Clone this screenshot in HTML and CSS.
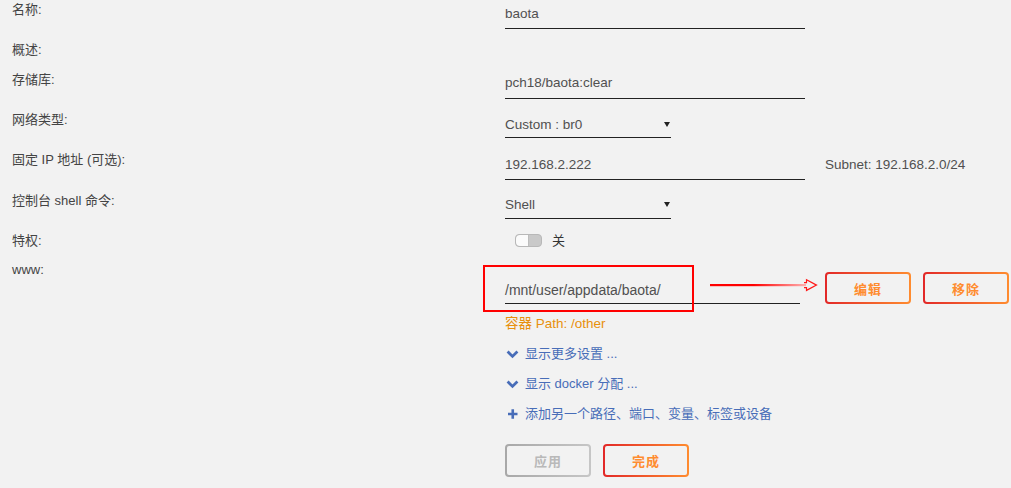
FILE: index.html
```html
<!DOCTYPE html>
<html lang="zh">
<head>
<meta charset="utf-8">
<title>Docker</title>
<link rel="stylesheet" href="styles.css">
</head>
<body>
<div class="form">
  <div class="row r-name">
    <div class="label">名称:</div>
    <div class="value"><div class="input w300">baota</div></div>
  </div>
  <div class="row r-desc">
    <div class="label">概述:</div>
    <div class="value"></div>
  </div>
  <div class="row r-repo">
    <div class="label">存储库:</div>
    <div class="value"><div class="input w300">pch18/baota:clear</div></div>
  </div>
  <div class="row r-net">
    <div class="label">网络类型:</div>
    <div class="value"><div class="select">Custom : br0<svg class="caret" width="6" height="5" viewBox="0 0 6 5"><path d="M0 0H6L3 5Z" fill="#222"/></svg></div></div>
  </div>
  <div class="row r-ip">
    <div class="label">固定 IP 地址 (可选):</div>
    <div class="value ip-line"><div class="input w300">192.168.2.222</div><span class="subnet">Subnet: 192.168.2.0/24</span></div>
  </div>
  <div class="row r-shell">
    <div class="label">控制台 shell 命令:</div>
    <div class="value"><div class="select">Shell<svg class="caret" width="6" height="5" viewBox="0 0 6 5"><path d="M0 0H6L3 5Z" fill="#222"/></svg></div></div>
  </div>
  <div class="row r-priv">
    <div class="label">特权:</div>
    <div class="value"><div class="toggle-line"><span class="toggle"><span class="knob"></span></span><span class="off">关</span></div></div>
  </div>
  <div class="row r-www">
    <div class="label">www:</div>
    <div class="value col">
      <div class="path-line">
        <div class="input path">/mnt/user/appdata/baota/</div>
        <button class="btn edit">编辑</button>
        <button class="btn remove">移除</button>
      </div>
      <div class="container-path">容器 Path: /other</div>
      <div class="link"><svg class="ico" width="13" height="9" viewBox="0 0 13 9"><path d="M1.6 1.6 6.5 6.4 11.4 1.6" fill="none" stroke="#486db8" stroke-width="2.8"/></svg>显示更多设置 ...</div>
      <div class="link"><svg class="ico" width="13" height="9" viewBox="0 0 13 9"><path d="M1.6 1.6 6.5 6.4 11.4 1.6" fill="none" stroke="#486db8" stroke-width="2.8"/></svg>显示 docker 分配 ...</div>
      <div class="link"><svg class="ico plus" width="13" height="10" viewBox="0 0 13 10"><path d="M2 5H11.5M6.75 0.3V9.7" fill="none" stroke="#486db8" stroke-width="2.6"/></svg>添加另一个路径、端口、变量、标签或设备</div>
      <div class="actions">
        <button class="btn disabled">应用</button>
        <button class="btn done">完成</button>
      </div>
    </div>
  </div>
</div>
<div class="mark-box"></div>
<svg class="mark-arrow" width="114" height="16" viewBox="0 0 114 16">
  <defs>
    <linearGradient id="sh" x1="0" y1="0" x2="1" y2="0">
      <stop offset="0" stop-color="#ff0000"/>
      <stop offset="0.45" stop-color="#ff0000"/>
      <stop offset="1" stop-color="#ffb0b0"/>
    </linearGradient>
  </defs>
  <rect x="2" y="6" width="96" height="2.2" fill="url(#sh)"/>
  <path d="M96 4.6H98.5V1.8L108.5 7.1L98.5 12.4V9.6H96" fill="none" stroke="#ff1a1a" stroke-width="1.2"/>
</svg>
</body>
</html>
```
FILE: styles.css
```css
html, body {
  margin: 0;
  padding: 0;
}
body {
  background: #f2f2f2;
  font-family: "Liberation Sans", "Noto Sans CJK SC", sans-serif;
  font-size: 13px;
  color: #444;
  position: relative;
  width: 1011px;
  height: 488px;
  overflow: hidden;
}
.form {
  padding-left: 12px;
}
.row {
  display: flex;
}
.label {
  width: 493px;
  flex: none;
  line-height: 18px;
  padding-top: 1px;
  color: #444;
}
.value {
  flex: 1;
}
.r-name { height: 40px; }
.r-desc { height: 30px; }
.r-repo { height: 40px; }
.r-net { height: 40px; }
.r-ip { height: 41px; }
.r-shell { height: 40px; }
.r-priv { height: 29px; }

.input {
  font-size: 13.5px;
  line-height: 18px;
  height: 18px;
  margin-top: 5px;
  padding-bottom: 5px;
  border-bottom: 1px solid #222;
  color: #505050;
}
.w300 { width: 300px; }
.r-repo .input { margin-top: 4px; padding-bottom: 6px; }
.ip-line {
  display: flex;
  align-items: flex-start;
}
.r-ip .input { margin-top: 6px; padding-bottom: 5px; }
.subnet {
  font-size: 13.5px;
  margin-left: 20px;
  margin-top: 6px;
  line-height: 18px;
  color: #505050;
}
.select {
  font-size: 13.5px;
  width: 166px;
  line-height: 18px;
  height: 18px;
  margin-top: 6px;
  padding-bottom: 3px;
  border-bottom: 1px solid #222;
  color: #505050;
  position: relative;
}
.r-shell .select { margin-top: 5px; padding-bottom: 4px; }
.caret {
  position: absolute;
  right: 1px;
  top: 6px;
}
.toggle-line {
  display: flex;
  align-items: center;
  margin-left: 10px;
  margin-top: 2px;
  height: 15px;
}
.toggle {
  display: inline-flex;
  width: 25px;
  height: 11px;
  border: 1px solid #b8b8b8;
  border-radius: 4px;
  background: #c9c9c9;
  overflow: hidden;
}
.knob {
  width: 12px;
  height: 11px;
  background: #fbfbfb;
  border-radius: 4px 0 0 4px;
  box-shadow: 1px 0 0 #bdbdbd;
}
.off {
  margin-left: 10px;
  color: #333;
  line-height: 15px;
}

.col {
  display: flex;
  flex-direction: column;
  padding-top: 12px;
}
.path-line {
  display: flex;
  align-items: flex-start;
}
.input.path {
  width: 295px;
  font-size: 14px;
  margin-top: 9px;
  padding-bottom: 4px;
  color: #505050;
}
.btn {
  font-family: "Liberation Sans", "Noto Sans CJK SC", sans-serif;
  font-size: 13px;
  font-weight: bold;
  color: #ff8c2f;
  width: 86px;
  height: 32px;
  border: 2px solid transparent;
  border-radius: 4px;
  background:
    linear-gradient(#f2f2f2, #f2f2f2) padding-box,
    linear-gradient(90deg, #e22828, #ff8c2f) border-box;
  padding: 0;
  letter-spacing: 1px;
}
.edit { margin-left: 25px; }
.remove { margin-left: 12px; }
.container-path {
  font-size: 13.5px;
  margin-top: 11px;
  line-height: 18px;
  color: #e8900c;
}
.link {
  font-size: 13px;
  line-height: 30px;
  color: #486db8;
  display: flex;
  align-items: center;
}
.container-path + .link { margin-top: 6px; }
.ico {
  margin-left: 1px;
  margin-right: 6px;
}
.actions {
  display: flex;
  margin-top: 15px;
}
.actions .btn {
  height: 33px;
}
.btn.disabled {
  color: #b9b9b9;
  background:
    linear-gradient(#f2f2f2, #f2f2f2) padding-box,
    linear-gradient(90deg, #a8a8a8, #c6c6c6) border-box;
}
.btn.done {
  margin-left: 12px;
}

.mark-box {
  position: absolute;
  left: 483px;
  top: 265px;
  width: 207px;
  height: 43px;
  border: 2px solid #ff0000;
}
.mark-arrow {
  position: absolute;
  left: 708px;
  top: 278px;
}
```
